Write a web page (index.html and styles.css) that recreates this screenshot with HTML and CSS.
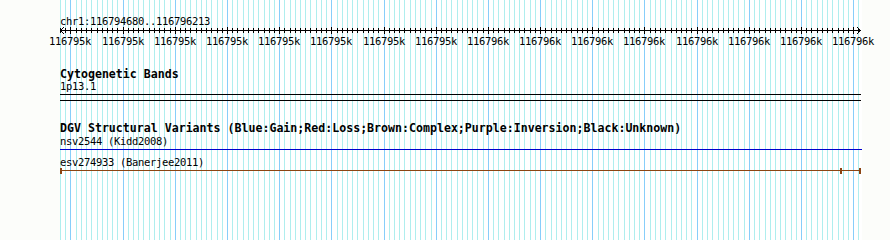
FILE: index.html
```html
<!DOCTYPE html>
<html lang="en">
<head>
    <meta charset="UTF-8">
    <title>chr1:116794680..116796213</title>
    <link rel="stylesheet" href="styles.css">
</head>
<body>
    <div class="panel">
        <svg class="grid" id="grid" width="802" height="240"></svg>
        <div class="tracks">
            <div class="seg-name">chr1:116794680..116796213</div>
            <svg class="ruler" id="ruler" width="802" height="9"></svg>
            <div class="ruler-labels" id="ruler-labels"></div>

            <div class="track cyto">
                <div class="track-title">Cytogenetic Bands</div>
                <div class="feature-label">1p13.1</div>
                <div class="band"></div>
            </div>

            <div class="track dgv">
                <div class="track-title">DGV Structural Variants (Blue:Gain;Red:Loss;Brown:Complex;Purple:Inversion;Black:Unknown)</div>
                <div class="feature-label">nsv2544 (Kidd2008)</div>
                <div class="variant gain"></div>
                <div class="feature-label esv">esv274933 (Banerjee2011)</div>
                <div class="variant complex">
                    <span class="cap" style="left: 0px"></span>
                    <span class="cap" style="left: 780px"></span>
                    <span class="cap" style="left: 799px"></span>
                </div>
            </div>
        </div>
    </div>

    <script>
    const start = 116794680;
    const end = 116796213;
    const scale = 800 / (end - start);
    const NS = 'http://www.w3.org/2000/svg';

    function px(bp) {
        return Math.round((bp - start) * scale);
    }

    function addLine(svg, x1, y1, x2, y2, cls) {
        const line = document.createElementNS(NS, 'line');
        line.setAttribute('x1', x1);
        line.setAttribute('y1', y1);
        line.setAttribute('x2', x2);
        line.setAttribute('y2', y2);
        line.setAttribute('class', cls);
        svg.appendChild(line);
    }

    const grid = document.getElementById('grid');
    const ruler = document.getElementById('ruler');
    const labels = document.getElementById('ruler-labels');

    addLine(ruler, 0, 4.5, 801, 4.5, 'axis');
    const head = document.createElementNS(NS, 'polyline');
    head.setAttribute('points', '4,1 0.5,4.5 4,8');
    head.setAttribute('class', 'arrow');
    ruler.appendChild(head);
    const tail = document.createElementNS(NS, 'polyline');
    tail.setAttribute('points', '797,1 800.5,4.5 797,8');
    tail.setAttribute('class', 'arrow');
    ruler.appendChild(tail);

    for (let bp = Math.ceil(start / 10) * 10; bp <= end; bp += 10) {
        const x = px(bp) + 0.5;
        const major = bp % 100 === 0;
        addLine(grid, x, 0, x, 240, major ? 'major' : 'minor');
        if (major) {
            addLine(ruler, x, 1, x, 8, 'tick');
            const label = document.createElement('span');
            label.className = 'tick-label';
            label.style.left = px(bp) + 'px';
            label.textContent = Math.round(bp / 1000) + 'k';
            labels.appendChild(label);
        } else {
            addLine(ruler, x, 2, x, 7, 'tick');
        }
    }
    </script>
</body>
</html>
```

FILE: styles.css
```css
body {
    margin: 0;
    background-color: #fcfdfa;
    font-family: "DejaVu Sans Mono", monospace;
    font-size: 10.5px;
    letter-spacing: -0.32px;
    color: #000;
}
.panel {
    position: relative;
    margin-left: 60px;
    width: 802px;
    height: 240px;
    background-color: #fff;
}
.grid {
    position: absolute;
    top: 0;
    left: 0;
    shape-rendering: crispEdges;
}
.grid .minor {
    stroke: #afeeee;
    stroke-width: 1;
}
.grid .major {
    stroke: #87cefa;
    stroke-width: 1;
}
.tracks {
    position: relative;
    padding-top: 15px;
}
.seg-name {
    height: 11px;
    line-height: 12px;
    white-space: nowrap;
}
.ruler {
    display: block;
    shape-rendering: crispEdges;
}
.ruler .axis,
.ruler .tick {
    stroke: #000;
    stroke-width: 1;
}
.ruler .arrow {
    fill: none;
    stroke: #000;
    stroke-width: 1;
}
.ruler-labels {
    position: relative;
    height: 12px;
    line-height: 12px;
}
.tick-label {
    position: absolute;
    top: 0;
    transform: translateX(-50%);
    white-space: nowrap;
}
.track-title {
    font-weight: bold;
    font-size: 11.6px;
    letter-spacing: 0;
    line-height: 12px;
    white-space: nowrap;
}
.feature-label {
    line-height: 12px;
    white-space: nowrap;
}
.cyto {
    margin-top: 21px;
}
.band {
    margin-top: 2px;
    width: 801px;
    height: 5px;
    border-top: 1px solid #000;
    border-bottom: 1px solid #000;
}
.dgv {
    margin-top: 21px;
}
.dgv .feature-label {
    margin-top: 1px;
}
.dgv .feature-label.esv {
    margin-top: 6px;
}
.variant.gain {
    margin-top: 2px;
    width: 802px;
    height: 1px;
    background-color: #0000cd;
}
.variant.complex {
    position: relative;
    width: 801px;
    height: 6px;
}
.variant.complex::before {
    content: "";
    position: absolute;
    left: 0;
    right: 0;
    top: 2px;
    height: 1px;
    background-color: #8b4513;
}
.cap {
    position: absolute;
    top: 0;
    width: 2px;
    height: 6px;
    background-color: #8b4513;
}
```
